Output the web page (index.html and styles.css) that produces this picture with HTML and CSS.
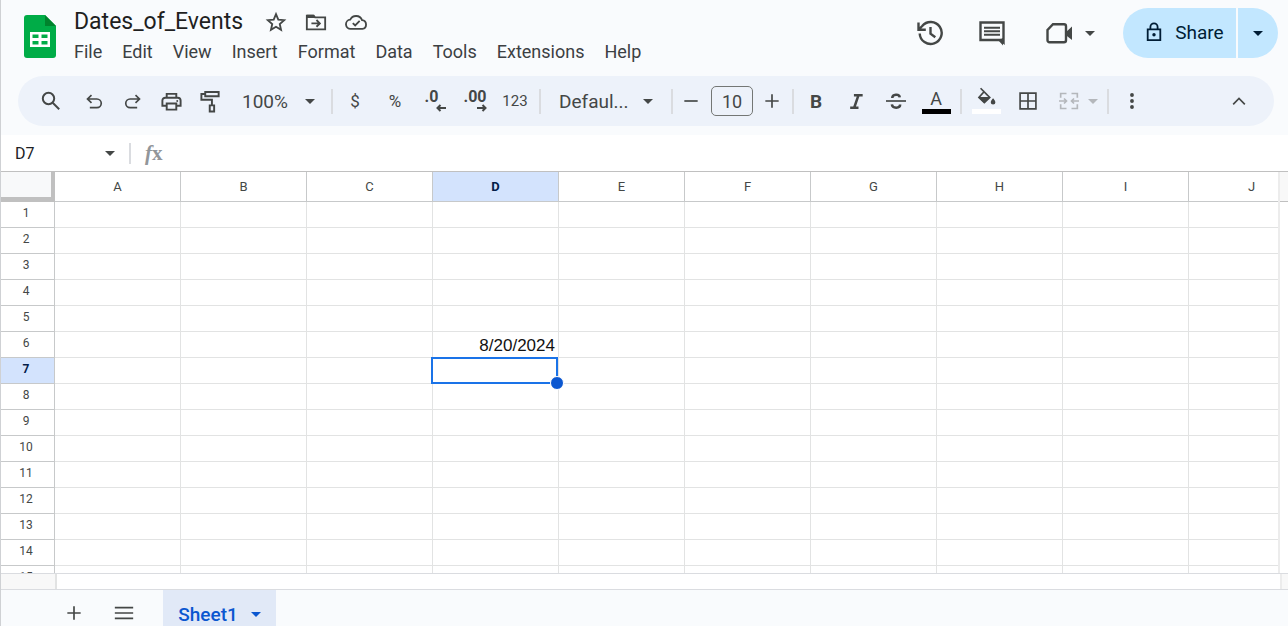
FILE: index.html
```html
<!DOCTYPE html>
<html lang="en">
<head>
<meta charset="utf-8">
<title>Dates_of_Events</title>
<link rel="stylesheet" href="styles.css">
</head>
<body>
<svg class="defs" aria-hidden="true">
  <symbol id="caret" viewBox="0 0 10 5"><path d="M0 0h10L5 5z" fill="currentColor"/></symbol>
</svg>
<div class="app">
  <header class="header">
    <svg class="logo" viewBox="0 0 32 43" role="img" aria-label="Sheets"><path d="M3 0h18l11 11v29a3 3 0 0 1-3 3H3a3 3 0 0 1-3-3V3a3 3 0 0 1 3-3z" fill="#00ac47"/><path d="M21 0l11 11H21z" fill="#00832d"/><path d="M6 17h20v15H6zM8.500 19.500v3.500h6v-3.500zM17.500 19.500v3.500h6v-3.500zM8.500 26v3.500h6V26zM17.500 26v3.500h6V26z" fill="#fff" fill-rule="evenodd"/></svg>
    <div class="heading">
      <div class="title-row">
        <h1 class="title">Dates_of_Events</h1>
        <button class="title-btn" aria-label="Star"><svg viewBox="0 0 24 24"><path class="line" d="M12 3.500l2.500 5.900 6.400.6-4.800 4.200 1.400 6.300-5.500-3.300-5.500 3.300 1.400-6.300L3.100 10l6.400-.6z"/></svg></button>
        <button class="title-btn" aria-label="Move"><svg viewBox="0 0 24 24"><path class="line" d="M2 5h7l2 2h11v13H2zM7 13.500h9M12.500 9.800l3.700 3.700-3.700 3.700"/><path d="M2 4h8l2 3.500H2z"/></svg></button>
        <button class="title-btn" aria-label="Document status"><svg viewBox="0 0 24 24"><path class="line" d="M6.500 19.500a5 5 0 0 1-.8-10A7 7 0 0 1 18.600 10a4.800 4.800 0 0 1 .4 9.500zM8.500 13.200l2.600 2.600 4.900-5"/></svg></button>
      </div>
      <nav class="menu">
        <button>File</button><button>Edit</button><button>View</button><button>Insert</button><button>Format</button><button>Data</button><button>Tools</button><button>Extensions</button><button>Help</button>
      </nav>
    </div>
    <div class="actions">
      <button class="action" aria-label="Version history"><svg viewBox="0 0 28 28"><path class="bold" d="M3.700 14.500A11 11 0 1 0 6.200 7L3.200 10M2.500 3.500v7.300h7.300M14.500 8v6.700l4.800 3.600"/></svg></button>
      <button class="action" aria-label="Comments"><svg viewBox="0 0 28 28"><path class="bold" d="M2.500 3.500h23v20l-3-2.500h-20z"/><path d="M25 19v7.500L20 21zM6 7.700h16v2H6zM6 11.200h16v2H6zM6 14.700h16v2H6z"/></svg></button>
      <button class="action meet" aria-label="Meet"><svg viewBox="0 0 28 28"><path class="bold" d="M8 5.200h11a2 2 0 0 1 2 2v14a2 2 0 0 1-2 2H4.500a2 2 0 0 1-2-2V11z"/><path d="M20 14l7-6.500v13.500L20 15.500z"/></svg><svg class="caret"><use href="#caret"/></svg></button>
      <div class="share">
        <button class="share-main"><svg viewBox="0 0 20 22"><path class="line" d="M3 8h14v12H3zM6 8V5.500a4 4 0 0 1 8 0V8"/><circle cx="10" cy="14" r="1.900"/></svg>Share</button>
        <button class="share-more" aria-label="Sharing options"><svg class="caret"><use href="#caret"/></svg></button>
      </div>
    </div>
  </header>

  <div class="toolbar" role="toolbar" aria-label="Main">
    <button class="tool search" aria-label="Search"><svg viewBox="0 0 24 24"><circle class="line" cx="9.500" cy="9.500" r="5.700"/><path class="line" d="M13.700 13.700l6.500 6.500"/></svg></button>
    <button class="tool step" aria-label="Undo"><svg viewBox="0 0 24 24"><path class="line" d="M7 20h8.500a5.200 5.200 0 0 0 0-10.400H4.500M9 5L4.200 9.600 9 14.200"/></svg></button>
    <button class="tool step" aria-label="Redo"><svg viewBox="0 0 24 24"><path class="line" d="M17 20H8.500a5.200 5.200 0 0 1 0-10.400h11M15 5l4.800 4.600-4.800 4.600"/></svg></button>
    <button class="tool step large" aria-label="Print"><svg viewBox="0 0 24 24"><path class="line" d="M7 8V4h10v4M7 16.500H2.500V11a3 3 0 0 1 3-3h13a3 3 0 0 1 3 3v5.500H17M7 14h10v6.500H7z"/><circle cx="18" cy="11.500" r="1"/></svg></button>
    <button class="tool step large" aria-label="Paint format"><svg viewBox="0 0 24 24"><path class="line" d="M6.500 2h14v4.500h-14zM6.500 4.200H2.500v6h11V16M11.200 16h4.600v6.500h-4.600z"/></svg></button>
    <label class="picker zoom"><select aria-label="Zoom"><option>100%</option></select><svg class="caret"><use href="#caret"/></svg></label>
    <span class="sep"></span>
    <button class="tool money">$</button>
    <button class="tool money">%</button>
    <button class="tool" aria-label="Decrease decimal places"><span class="decimal less">.0<svg viewBox="0 0 10 8"><path class="line" d="M10 4H1.500M4.500 1l-3 3 3 3"/></svg></span></button>
    <button class="tool" aria-label="Increase decimal places"><span class="decimal">.00<svg viewBox="0 0 10 8"><path class="line" d="M0 4h8.500M5.500 1l3 3-3 3"/></svg></span></button>
    <button class="tool numbers">123</button>
    <span class="sep"></span>
    <label class="picker family"><select aria-label="Font"><option>Defaul...</option></select><svg class="caret"><use href="#caret"/></svg></label>
    <span class="sep"></span>
    <button class="tool nudge" aria-label="Decrease font size"><svg viewBox="0 0 24 24"><path class="line" d="M4 12h16"/></svg></button>
    <input class="size" aria-label="Font size" value="10">
    <button class="tool nudge" aria-label="Increase font size"><svg viewBox="0 0 24 24"><path class="line" d="M4 12h16M12 4v16"/></svg></button>
    <span class="sep"></span>
    <button class="tool strong">B</button>
    <button class="tool" aria-label="Italic"><svg viewBox="0 0 24 24"><path class="heavy" d="M9.500 5H20M5 20h10M14.800 5.500L10 19.500"/></svg></button>
    <button class="tool" aria-label="Strikethrough"><svg viewBox="0 0 24 24"><path class="line" d="M0 12h24"/><path class="heavy" d="M7.500 8.500c0-4.800 8.500-5.300 9-.8M7 16c.8 5.500 10 5 10 .2"/></svg></button>
    <button class="tool color"><span class="letter">A</span><span class="swatch ink"></span></button>
    <span class="sep"></span>
    <button class="tool color fill" aria-label="Fill color"><svg viewBox="0 0 24 24"><path class="line" d="M5.500 1.500l8.200 8.200M9.700 5.700l6.800 6.800-6.500 6.300-6.500-6.300z"/><path d="M3 12h14l-6.200 6.700a1.200 1.200 0 0 1-1.700 0zM20.500 13.500s2.800 3 2.800 4.800a2.800 2.800 0 0 1-5.600 0c0-1.800 2.800-4.800 2.800-4.800z"/></svg><span class="swatch paper"></span></button>
    <button class="tool" aria-label="Borders"><svg viewBox="0 0 24 24"><path class="line" d="M2.500 2.500h19v19h-19zM12 3v18M3 12h18"/></svg></button>
    <button class="tool merge" disabled aria-label="Merge cells"><svg viewBox="0 0 24 24"><path class="line" d="M9 3H2v5M2 16v5h7M15 3h7v5M22 16v5h-7M0 12h9M6 9l3 3-3 3M24 12h-9M18 9l-3 3 3 3"/></svg><svg class="caret"><use href="#caret"/></svg></button>
    <span class="sep"></span>
    <button class="tool more" aria-label="More"><svg viewBox="0 0 24 24"><circle cx="12" cy="4.800" r="2.300"/><circle cx="12" cy="12" r="2.300"/><circle cx="12" cy="19.200" r="2.300"/></svg></button>
    <button class="tool collapse" aria-label="Hide the menus"><svg viewBox="0 0 24 24"><path class="line" d="M5 16l7-7 7 7"/></svg></button>
  </div>

  <div class="formula-bar">
    <input class="name-box" aria-label="Name box" value="D7">
    <svg class="caret"><use href="#caret"/></svg>
    <label class="fx" for="formula"><i>f</i>x</label>
    <input class="formula" id="formula">
  </div>

  <main class="sheet">
    <div class="viewport">
      <table class="grid">
        <thead>
          <tr><td class="corner"></td><th>A</th><th>B</th><th>C</th><th class="active">D</th><th>E</th><th>F</th><th>G</th><th>H</th><th>I</th><th>J</th></tr>
        </thead>
        <tbody>
          <tr><th>1<td><td><td><td><td><td><td><td><td><td>
          <tr><th>2<td><td><td><td><td><td><td><td><td><td>
          <tr><th>3<td><td><td><td><td><td><td><td><td><td>
          <tr><th>4<td><td><td><td><td><td><td><td><td><td>
          <tr><th>5<td><td><td><td><td><td><td><td><td><td>
          <tr><th>6<td><td><td><td>8/20/2024<td><td><td><td><td><td>
          <tr><th class="active">7<td><td><td><td class="selected"><td><td><td><td><td><td>
          <tr><th>8<td><td><td><td><td><td><td><td><td><td>
          <tr><th>9<td><td><td><td><td><td><td><td><td><td>
          <tr><th>10<td><td><td><td><td><td><td><td><td><td>
          <tr><th>11<td><td><td><td><td><td><td><td><td><td>
          <tr><th>12<td><td><td><td><td><td><td><td><td><td>
          <tr><th>13<td><td><td><td><td><td><td><td><td><td>
          <tr><th>14<td><td><td><td><td><td><td><td><td><td>
          <tr><th>15<td><td><td><td><td><td><td><td><td><td>
        </tbody>
      </table>
    </div>
    <div class="rail"></div>
  </main>
  <div class="scroll-row"><span class="scroll-start"></span><span class="scroll-end"></span></div>

  <footer class="tabs">
    <button class="tab-tool" aria-label="Add sheet"><svg viewBox="0 0 24 24"><path class="line" d="M4 12h16M12 4v16"/></svg></button>
    <button class="tab-tool" aria-label="All sheets"><svg viewBox="0 0 24 24"><path class="line" d="M1 5.500h22M1 12h22M1 18.500h22"/></svg></button>
    <button class="tab">Sheet1<svg class="caret"><use href="#caret"/></svg></button>
  </footer>
</div>
</body>
</html>
```
FILE: styles.css
```css
* { box-sizing: border-box; }
body { margin: 0; font-family: Roboto, "Liberation Sans", sans-serif; color: #444746; }
button, input, select { font: inherit; color: inherit; border: 0; padding: 0; margin: 0; background: none; border-radius: 0; }
svg { fill: currentColor; flex: none; }
.defs { position: absolute; width: 0; height: 0; }
.line, .bold, .heavy { fill: none; stroke: currentColor; stroke-width: 2; }
.bold { stroke-width: 2.4; }
.heavy { stroke-width: 3; }
.caret { width: 10px; height: 5px; }

.app { height: 100vh; display: flex; flex-direction: column; overflow: hidden; background: #f9fbfd; border-left: 1px solid #cfd1d4; }

.header { height: 76px; flex: none; display: flex; align-items: flex-start; padding-left: 23px; padding-right: 10px; }
.logo { width: 32px; height: 43px; margin-top: 15px; }
.heading { padding-top: 8px; padding-left: 18px; }
.title-row { display: flex; align-items: center; height: 28px; }
.title { margin: 0 13px 0 0; font-size: 23px; line-height: 28px; font-weight: 400; color: #1f1f1f; }
.title-btn { width: 40px; height: 28px; display: flex; align-items: center; justify-content: center; }
.title-btn svg { width: 22px; height: 22px; }
.menu { display: flex; gap: 20px; height: 32px; }
.menu button { font-size: 18px; line-height: 32px; color: #3c4043; }
.actions { margin-left: auto; display: flex; align-items: center; padding-top: 8px; }
.action { width: 62px; height: 50px; display: flex; align-items: center; justify-content: center; }
.action svg { width: 28px; height: 28px; }
.action .caret, .share .caret { width: 10px; height: 5px; }
.meet { width: 98px; gap: 12px; padding-right: 4px; margin-right: 2px; }
.share { display: flex; gap: 2px; height: 50px; color: #001d35; }
.share-main { width: 113px; display: flex; align-items: center; justify-content: center; gap: 12px; padding-left: 10px; padding-bottom: 2px; background: #c2e7ff; border-radius: 25px 0 0 25px; font-size: 19px; font-weight: 400; }
.share-main svg { width: 18px; height: 20px; }
.share-more { width: 40px; display: flex; align-items: center; justify-content: center; background: #c2e7ff; border-radius: 0 25px 25px 0; }

.toolbar { flex: none; height: 50px; margin: 0 14px 0 17px; padding: 0 15px 0 13px; display: flex; align-items: center; background: #edf2fa; border-radius: 25px; }
.tool { width: 40px; height: 40px; flex: none; display: flex; align-items: center; justify-content: center; }
.tool svg { width: 20px; height: 20px; }
.tool .caret { width: 10px; height: 5px; }
.search { margin-right: 3px; }
.search svg { width: 24px; height: 24px; }
.step { width: 39px; }
.large svg { width: 23px; height: 23px; }
.sep { width: 2px; height: 25px; flex: none; margin: 0 2px 0 4px; background: #dadce0; }
.picker { display: flex; align-items: center; flex: none; font-size: 19px; }
.picker select { appearance: none; outline: 0; }
.zoom { width: 97px; padding-left: 12px; }
.zoom select { width: 63px; }
.family { width: 124px; padding-left: 16px; }
.family select { width: 84px; }
.money { font-size: 17px; }
.numbers { font-size: 15px; }
.decimal { display: grid; height: 22px; font-size: 16px; line-height: 14px; font-weight: 700; justify-items: end; }
.decimal svg { width: 10px; height: 8px; }
.less { padding-right: 7px; }
.less svg { margin-right: -8px; }
.nudge { width: 32px; }
.size { width: 42px; height: 30px; margin: 0 3px 0 4px; border: 1px solid #747775; border-radius: 5px; text-align: center; font-size: 18px; }
.strong { font-size: 19px; font-weight: 700; }
.color { flex-direction: column; justify-content: flex-end; padding-bottom: 7px; gap: 2px; }
.letter { font-size: 18px; line-height: 16px; font-weight: 400; }
.swatch { width: 29px; height: 5px; }
.ink { background: #000; }
.paper { background: #fff; }
.fill { width: 44px; }
.merge { width: 55px; gap: 9px; padding-left: 6px; color: #b4b7bb; }
.more { width: 42px; }
.collapse { margin-left: auto; }

.formula-bar { flex: none; height: 36px; margin-top: 9px; display: flex; align-items: center; background: #fff; }
.name-box { width: 104px; padding-left: 14px; font-size: 16px; color: #202124; }
.fx { display: flex; align-items: center; height: 21px; margin-left: 14px; padding-left: 14px; border-left: 2px solid #dadce0; font-family: "Liberation Serif", serif; font-size: 21px; font-weight: 700; color: #92969a; }
.formula { flex: 1; }

.sheet { flex: 1; min-height: 0; display: flex; background: #fff; border-top: 1px solid #c0c0c0; }
.viewport { flex: 1; min-width: 0; overflow: hidden; border-right: 2px solid #ececec; }
.rail { width: 8px; height: 30px; background: #f8f8f8; border-bottom: 1px solid #c0c0c0; }
.grid { width: 1314px; table-layout: fixed; border-collapse: separate; border-spacing: 0; }
.grid td, .grid th { height: 26px; padding: 0; border-right: 1px solid #e2e3e3; border-bottom: 1px solid #e2e3e3; }
.grid th { padding: 0 3px 3px 0; font-size: 12px; line-height: 18px; font-weight: 400; border-color: #c7c9ca; }
.grid thead th { height: 30px; padding: 0; font-size: 13px; }
.grid .corner { width: 54px; height: 30px; background: #f8f9fa; border-right: 4px solid #c0c0c0; border-bottom: 5px solid #c0c0c0; }
.grid td { padding: 2px 3px 0 0; text-align: right; font-family: "Liberation Sans", Arial, sans-serif; font-size: 17px; line-height: 20px; color: #111; }
.grid .active { background: #d3e3fd; color: #041e49; font-weight: 700; }
.selected { position: relative; }
.selected::before { content: ""; position: absolute; inset: -1px 0 -1px -2px; border: 2px solid #1a73e8; }
.selected::after { content: ""; position: absolute; right: -6px; bottom: -7px; width: 12px; height: 12px; border: 1px solid #fff; border-radius: 50%; background: #0b57d0; }

.scroll-row { flex: none; height: 16px; display: flex; justify-content: space-between; background: #fff; border-top: 1px solid #dadce0; }
.scroll-start { width: 56px; background: #f8f8f8; border-right: 2px solid #e2e3e3; }
.scroll-end { width: 8px; background: #f8f8f8; border-left: 2px solid #ececec; }
.tabs { flex: none; height: 37px; display: flex; padding-left: 48px; border-top: 1px solid #dadce0; overflow: hidden; }
.tab-tool { width: 50px; height: 46px; display: flex; align-items: center; justify-content: center; }
.tab-tool svg { width: 20px; height: 20px; }
.tab { width: 113px; height: 48px; margin-left: 14px; display: flex; align-items: center; justify-content: center; gap: 13px; background: #e1e9f7; color: #0b57d0; font-size: 19px; font-weight: 500; }
```
